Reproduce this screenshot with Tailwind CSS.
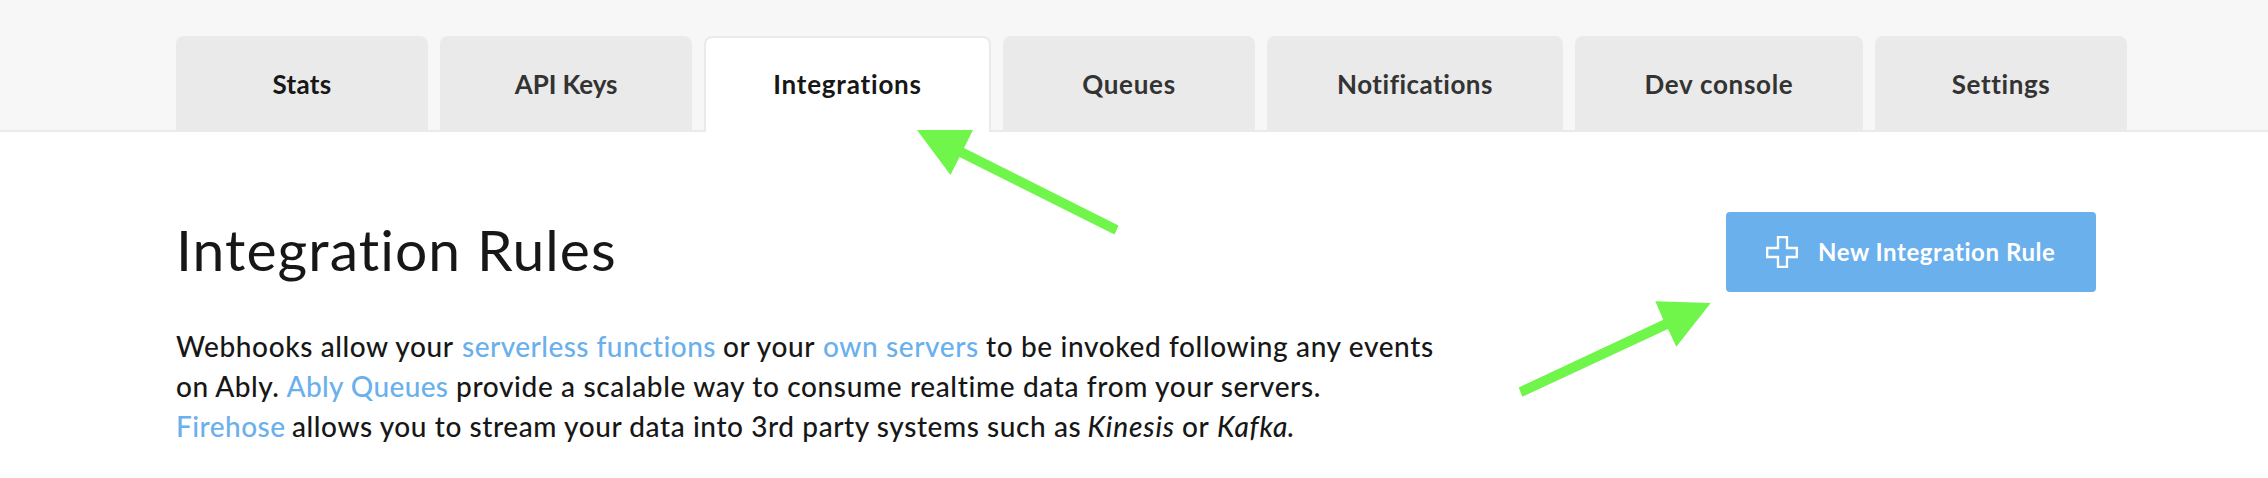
<!DOCTYPE html>
<html lang="en">
<head>
<meta charset="utf-8">
<title>Integration Rules</title>
<script src="https://cdn.jsdelivr.net/npm/@tailwindcss/browser@4"></script>
</head>
<body class="relative h-[478px] overflow-hidden bg-white font-['Lato','Open_Sans',sans-serif] text-[#171717]">
<header class="h-[132px] border-b-2 border-[#eaeaea] bg-[#f7f7f7] pt-9 pl-44">
  <nav class="flex h-24 text-[26px] leading-[97px] font-bold whitespace-nowrap text-[#333] [&>a]:rounded-t-lg [&>a]:bg-[#eaeaea] [&>a]:text-center">
    <a class="w-[252px] text-[#171717] tracking-[0.3px]">Stats</a>
    <a class="ml-3 w-[252px] tracking-[-0.1px]">API Keys</a>
    <a class="ml-3 w-[287px] border-2 border-b-0 border-[#eaeaea] !bg-white !leading-[93px] text-[#171717] tracking-[0.8px]">Integrations</a>
    <a class="ml-3 w-[252px] tracking-[0.7px]">Queues</a>
    <a class="ml-3 w-[296px] tracking-[0.5px]">Notifications</a>
    <a class="ml-3 w-[288px] tracking-[0.7px]">Dev console</a>
    <a class="ml-3 w-[252px] tracking-[0.6px]">Settings</a>
  </nav>
</header>
<main class="pl-44">
  <div class="flex h-[194px] w-[1920px] items-start justify-between pt-[76px]">
    <h1 class="text-[57px] leading-[82px] tracking-[1.07px]">Integration Rules</h1>
    <button class="mt-1 flex h-20 w-[370px] items-center rounded bg-[#6ab0ed] pl-10 text-white">
      <svg class="size-8" viewBox="0 0 32 32" fill="none" stroke="currentColor" stroke-width="2.3"><path d="M12 1.200h9v10.800h9.800v9H21v9.800h-9V21H1.200v-9H12z"/></svg>
      <span class="ml-5 text-2xl leading-[78px] font-bold tracking-[0.56px] whitespace-nowrap">New Integration Rule</span>
    </button>
  </div>
  <div class="text-[28px] leading-10 font-medium whitespace-nowrap [&_a]:text-[#6ab0ed]">
    <p class="flex"><span class="w-[286px] tracking-[0.6px]">Webhooks allow your</span><a class="w-[261px] tracking-[0.46px]">serverless functions</a><span class="w-[100px] tracking-[0.6px]">or your</span><a class="w-[163px] tracking-[0.6px]">own servers</a><span class="tracking-[0.63px]">to be invoked following any events</span></p>
    <p class="flex"><span class="w-[110.5px] tracking-[0.5px]">on Ably.</span><a class="w-[169.5px] tracking-[0.38px]">Ably Queues</a><span class="tracking-[0.64px]">provide a scalable way to consume realtime data from your servers.</span></p>
    <p class="flex"><a class="w-[116px] tracking-[0.47px]">Firehose</a><span class="w-[795.5px] tracking-[0.58px]">allows you to stream your data into 3rd party systems such as</span><em class="w-[94.5px] tracking-[0.85px]">Kinesis</em><span class="w-[35px] tracking-[0.6px]">or</span><em class="w-[70px] tracking-[0.75px]">Kafka</em><span>.</span></p>
  </div>
</main>
<svg class="absolute inset-0 h-[478px] w-[2268px]" viewBox="0 0 2268 478" fill="#70f54a">
  <path d="M917 130h56l-9 18 154.500 77.500-4 9L959.500 157l-9 18z"/>
  <path d="M1655.300 301.300l55.400 1.700-34.400 43.700-8.300-17.700-145.700 67.700-3.600-9.200 144.600-67.800z"/>
</svg>
</body>
</html>
